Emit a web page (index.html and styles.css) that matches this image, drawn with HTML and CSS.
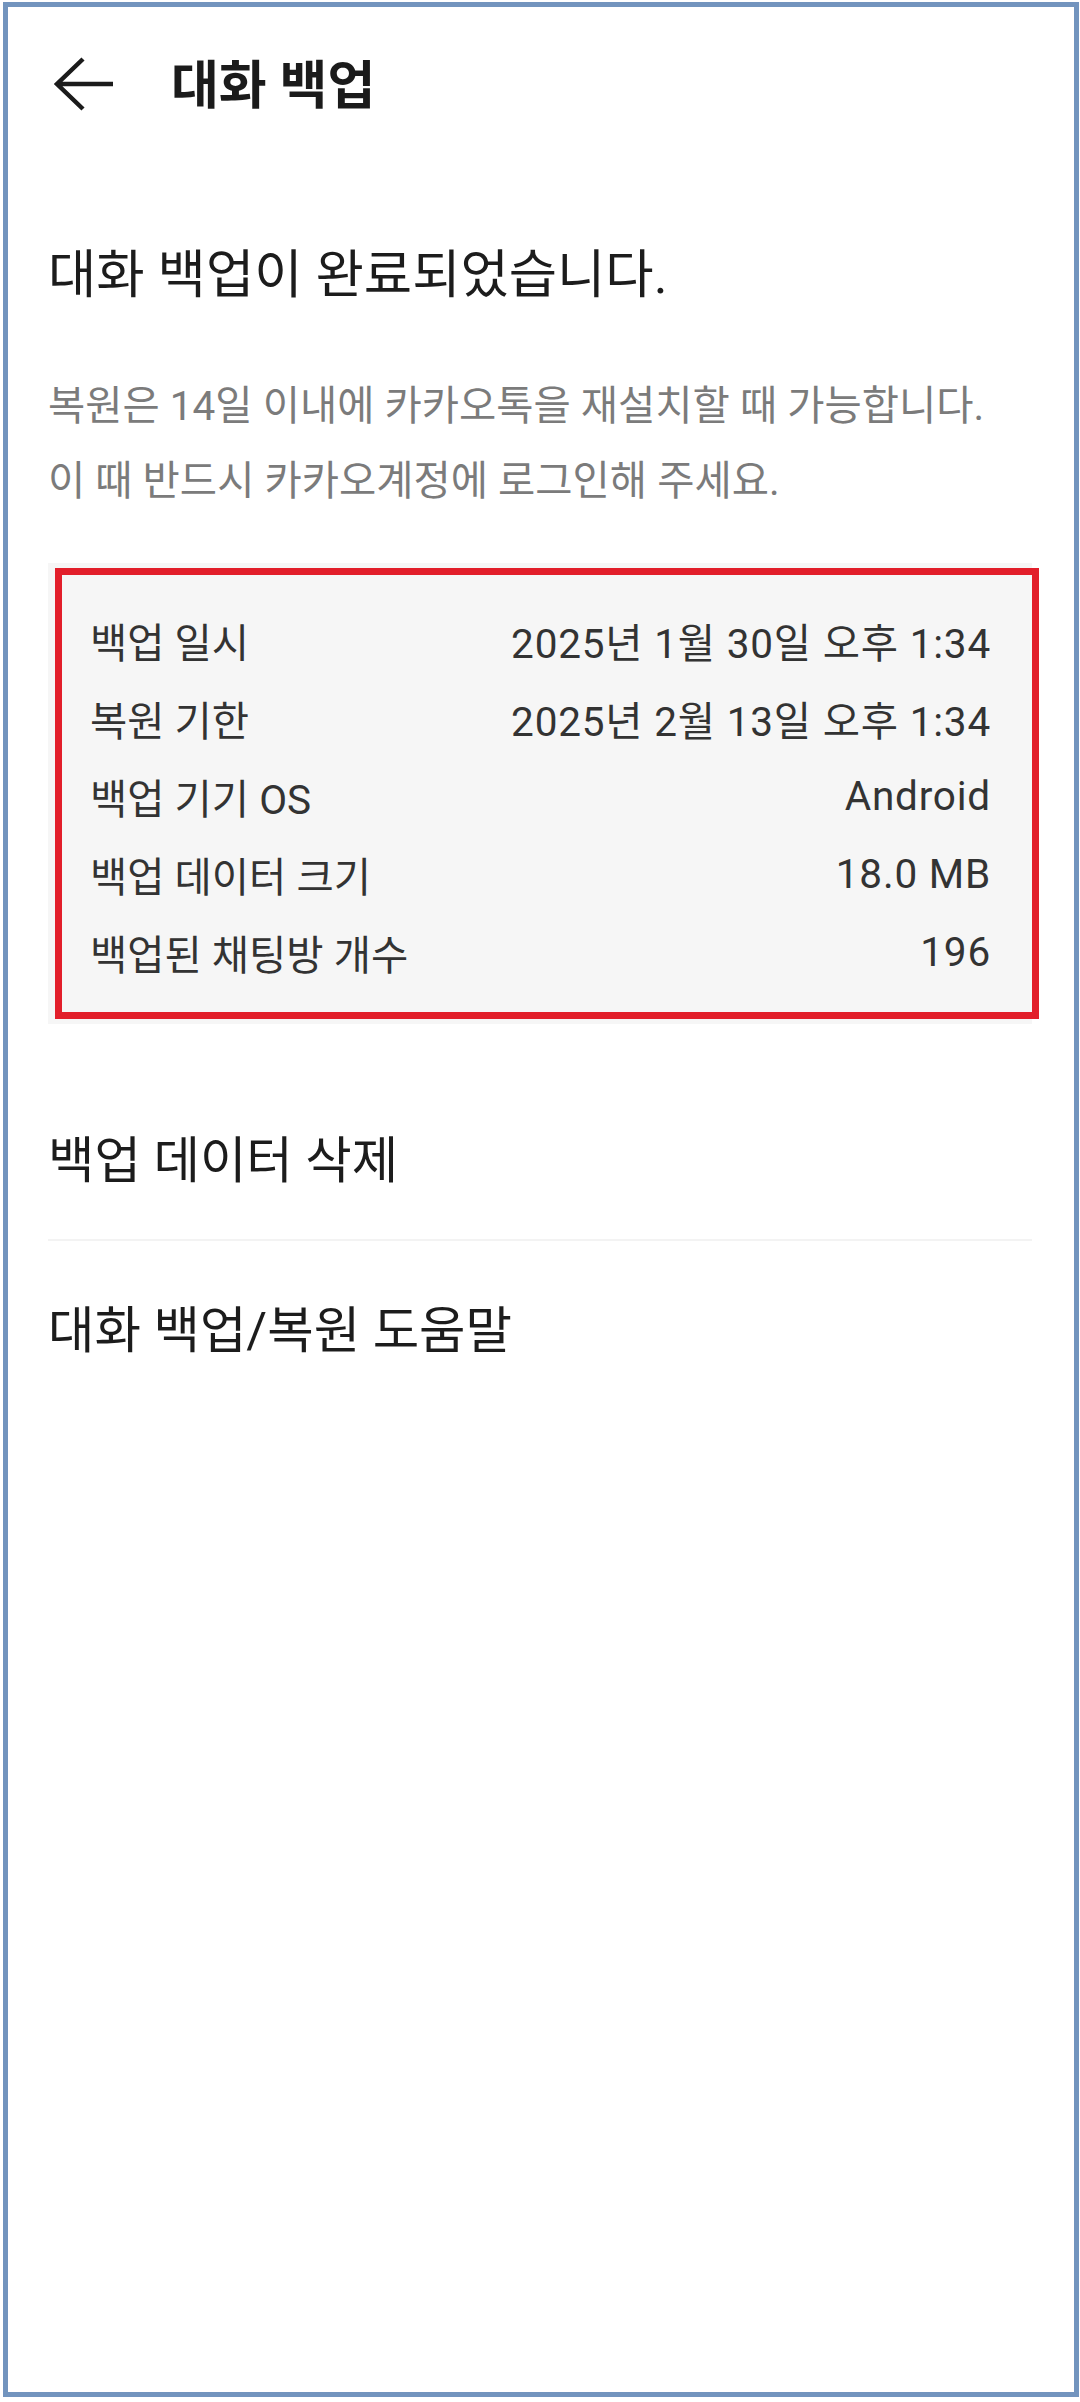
FILE: index.html
```html
<!DOCTYPE html>
<html lang="ko">
<head>
    <meta charset="UTF-8">
    <meta name="viewport" content="width=device-width, initial-scale=1.0">
    <title>대화 백업</title>

    <!-- css file link -->
    <link rel="stylesheet" href="styles.css">
</head>
<body>

    <div class="frame">

        <!-- top bar -->
        <div class="topbar">
            <svg class="back" width="66" height="66" viewBox="0 0 66 66">
                <path d="M65 33 H9 M35 8 L9 33 L35 58" fill="none" stroke="#1b1b1b" stroke-width="4.5"/>
            </svg>
            <h1 class="title">대화 백업</h1>
        </div>

        <!-- done message -->
        <h2 class="headline">대화 백업이 완료되었습니다.</h2>
        <p class="desc">복원은 14일 이내에 카카오톡을 재설치할 때 가능합니다.<br>이 때 반드시 카카오계정에 로그인해 주세요.</p>

        <!-- backup info -->
        <div class="info-card">
            <div class="row"><span>백업 일시</span><span>2025년 1월 30일 오후 1:34</span></div>
            <div class="row"><span>복원 기한</span><span>2025년 2월 13일 오후 1:34</span></div>
            <div class="row"><span>백업 기기 OS</span><span>Android</span></div>
            <div class="row"><span>백업 데이터 크기</span><span>18.0 MB</span></div>
            <div class="row"><span>백업된 채팅방 개수</span><span>196</span></div>
            <div class="mark"></div>
        </div>

        <!-- menu -->
        <div class="menu">
            <div class="menu-item first">백업 데이터 삭제</div>
            <div class="menu-item">대화 백업/복원 도움말</div>
        </div>

    </div>

</body>
</html>
```

FILE: styles.css
```css
*{
    margin: 0;
    padding: 0;
    box-sizing: border-box;
}
body{
    font-family: Roboto, "Noto Sans CJK KR", sans-serif;
    background: #fff;
    color: #1e1e1e;
}
.frame{
    margin: 2px 1px 5px 3px;
    height: 2395px;
    border: 5px solid #7294be;
    padding: 0 42px 0 40px;
}
.topbar{
    display: flex;
    align-items: center;
    height: 154px;
}
.back{
    display: block;
    flex: none;
}
.title{
    margin-left: 57px;
    font-size: 52px;
    font-weight: 700;
    color: #1b1b1b;
    line-height: 1;
    padding-top: 6px;
}
.headline{
    margin-top: 80px;
    font-size: 52.5px;
    font-weight: 400;
    line-height: 68px;
    color: #1c1c1c;
}
.desc{
    margin-top: 60px;
    font-size: 40.5px;
    line-height: 75px;
    color: #7b7b7b;
}
.info-card{
    position: relative;
    margin-top: 44px;
    background: #f6f6f6;
    padding: 38px 41px 33px 42px;
}
.row{
    display: flex;
    justify-content: space-between;
    align-items: center;
    height: 78px;
    font-size: 40.5px;
    color: #333;
}
.row span:last-child{
    letter-spacing: 0.8px;
}
.mark{
    position: absolute;
    left: 7px;
    top: 5px;
    width: 984px;
    height: 451px;
    border: 7px solid #e21e2a;
}
.menu{
    margin-top: 103px;
}
.menu-item{
    font-size: 50.5px;
    line-height: 68px;
    color: #1c1c1c;
    padding-top: 56px;
}
.menu-item.first{
    padding-top: 0;
    padding-bottom: 44px;
    border-bottom: 2px solid #f3f3f3;
}
```
